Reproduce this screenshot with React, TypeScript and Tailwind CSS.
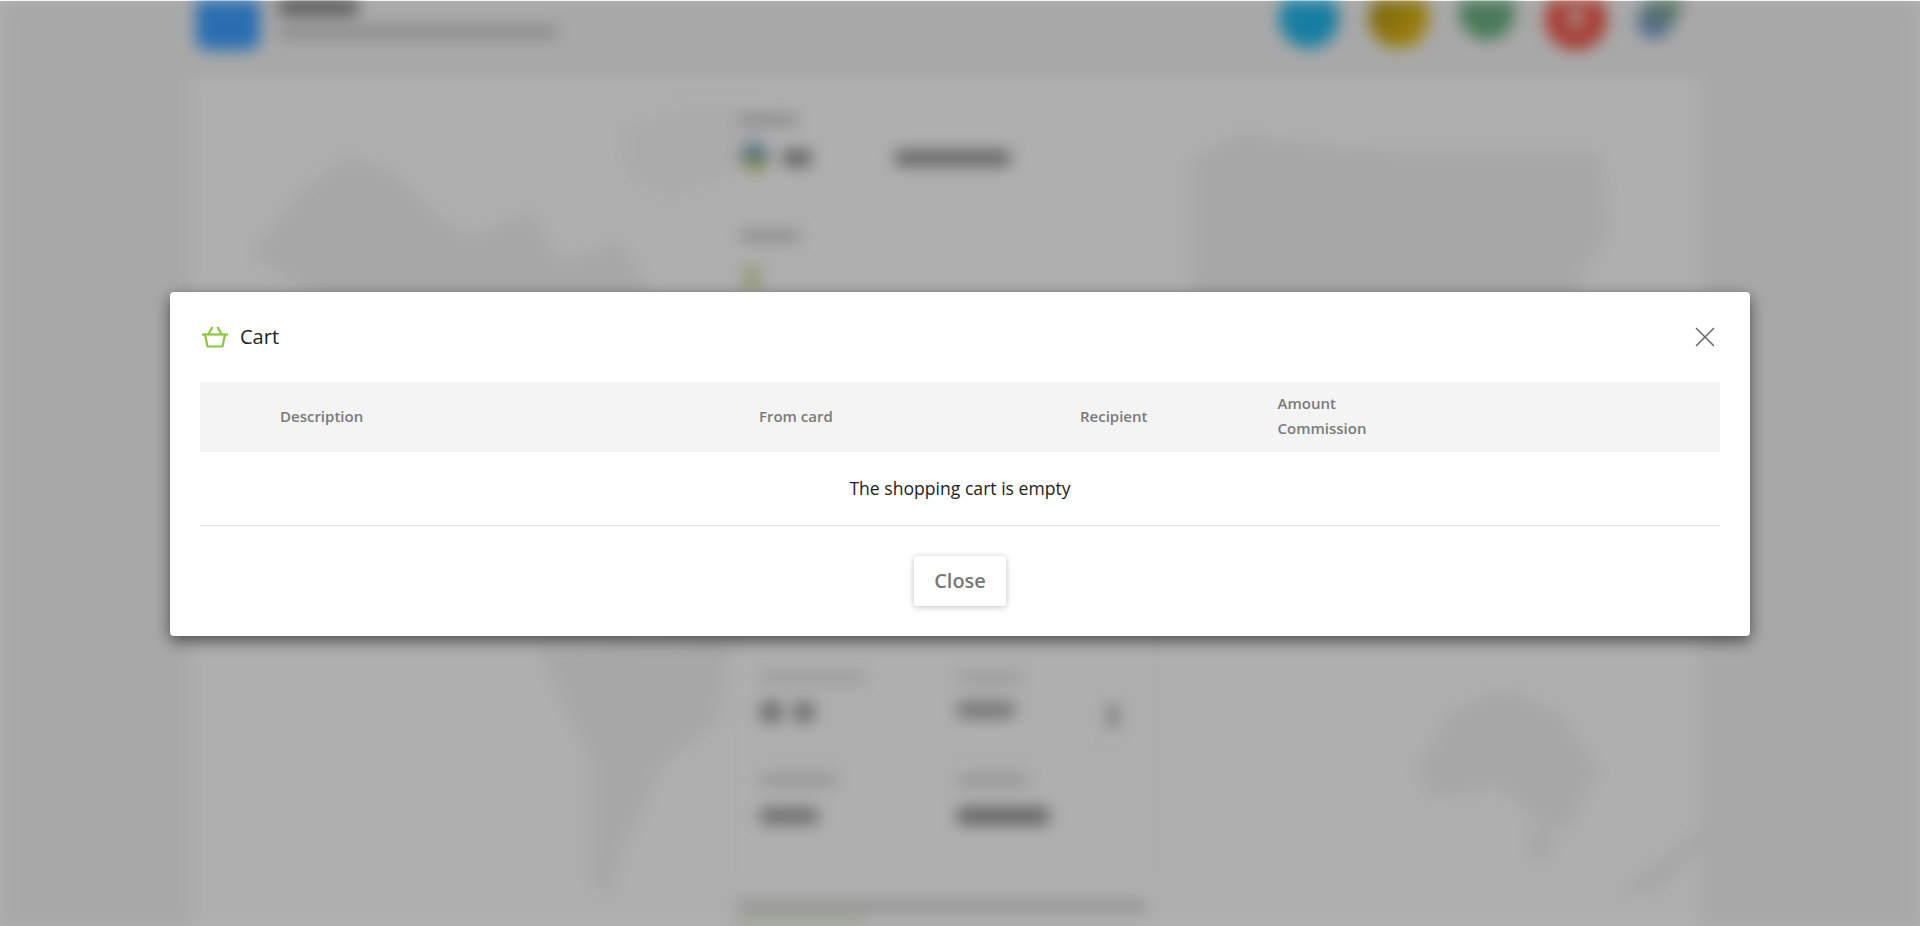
const Bar = ({ className }: { className: string }) => <div className={`rounded-sm ${className}`} />

function WorldMap() {
  return (
    <svg className="absolute -left-[190px] -top-[80px]" width="1920" height="926" viewBox="0 0 1920 926" fill="#f0f0f0">
      <path d="M250 255 L300 190 L345 155 L385 165 L440 215 L470 235 L530 210 L560 260 L620 240 L650 290 L640 400 L560 420 L480 400 L400 330 L300 290 Z" />
      <path d="M620 130 L700 100 L770 110 L740 170 L670 200 L630 180 Z" fill="#f4f4f4" />
      <path d="M540 650 L730 640 L720 720 L660 770 L620 860 L610 900 L590 880 L590 760 L560 700 Z" />
      <path d="M1190 160 L1240 130 L1290 140 L1400 150 L1600 150 L1610 230 L1580 280 L1600 400 L1460 420 L1300 400 L1190 330 Z" />
      <path d="M1415 770 L1450 710 L1500 685 L1560 710 L1600 770 L1570 830 L1540 825 L1500 790 L1430 800 Z" />
      <path d="M1525 830 L1555 830 L1550 860 L1530 860 Z" />
      <path d="M1625 885 L1670 850 L1700 825 L1705 845 L1660 890 L1630 900 Z" />
    </svg>
  )
}

function BlurredPage() {
  return (
    <div className="h-[926px] overflow-hidden bg-[#f1f1f1] blur-[8px]">
      <header className="flex h-20 items-start justify-between pl-[196px] pr-[243px]">
        <div className="flex gap-[18px]">
          <div className="mt-[-14px] h-[64px] w-[64px] rounded-xl bg-[#3d9eff]" />
          <div className="flex flex-col gap-3">
            <Bar className="h-3.5 w-20 bg-[#707070]" />
            <Bar className="h-3 w-[280px] bg-[#c4c4c4]" />
          </div>
        </div>
        <div className="flex items-start gap-[30px]">
          <div className="mt-[-12px] h-[60px] w-[60px] rounded-full bg-[#22b5e8]" />
          <div className="mt-[-12px] h-[60px] w-[60px] rounded-full bg-gradient-to-br from-[#a08a10] to-[#f5c518]" />
          <div className="mt-[-16px] h-[56px] w-[56px] rounded-full bg-[#6bb080]" />
          <div className="mt-[-12px] flex h-[62px] w-[62px] items-center justify-center rounded-full bg-[#f0584a]">
            <div className="h-5 w-4 rounded-b-full bg-[#f5c8c0]" />
          </div>
          <div className="ml-[6px] mt-[-16px] h-[56px] w-[34px] rotate-[30deg] rounded-full bg-gradient-to-t from-[#6f94d8] to-[#8cae60]" />
        </div>
      </header>

      <main className="relative ml-[190px] h-[846px] w-[1510px] bg-[#fbfbfb]">
        <WorldMap />
        <div className="relative ml-[546px] flex w-[420px] flex-col pt-[34px]">
          <Bar className="ml-[4px] h-3 w-[58px] bg-[#c8c8c8]" />
          <div className="mt-[18px] flex items-center">
            <div className="ml-[5px] h-7 w-7 rounded-full bg-gradient-to-b from-[#3f7fc4] to-[#e5d84a]" />
            <Bar className="ml-[14px] h-4 w-[28px] bg-[#888888]" />
            <Bar className="ml-[84px] h-4 w-[115px] bg-[#909090]" />
          </div>
          <Bar className="ml-[4px] mt-[58px] h-3 w-[60px] bg-[#c8c8c8]" />
          <div className="ml-[6px] mt-[22px] h-7 w-5 rounded-full bg-[#d4e0b0]" />

          <div className="ml-[1px] mt-[287px] flex h-[293px] flex-col justify-end rounded-sm border border-[#f0f0f0] px-[22px] pb-[47px]">
            <div className="grid grid-cols-[197px_1fr] gap-y-[23px]">
              <div className="flex flex-col gap-[18px] border-b border-[#f0f0f0] pb-5">
                <Bar className="h-3 w-[105px] bg-[#dddddd]" />
                <div className="flex gap-3">
                  <Bar className="h-5 w-[22px] bg-[#999999]" />
                  <Bar className="h-5 w-[20px] bg-[#999999]" />
                </div>
              </div>
              <div className="flex flex-col gap-[18px] border-b border-[#f0f0f0] pb-5">
                <Bar className="h-3 w-[66px] bg-[#dddddd]" />
                <div className="flex justify-between pr-[14px]">
                  <Bar className="h-4 w-[58px] bg-[#a5a5a5]" />
                  <Bar className="h-7 w-3 bg-[#bbbbbb]" />
                </div>
              </div>
              <div className="flex flex-col gap-[22px]">
                <Bar className="h-3 w-[78px] bg-[#d5d5d5]" />
                <Bar className="h-4 w-[58px] bg-[#999999]" />
              </div>
              <div className="flex flex-col gap-[22px]">
                <Bar className="h-3 w-[72px] bg-[#d5d5d5]" />
                <Bar className="h-4 w-[92px] bg-[#888888]" />
              </div>
            </div>
          </div>

          <Bar className="mt-[28px] h-3 w-[410px] bg-[#d0d0d0]" />
          <Bar className="mt-[8px] h-3 w-[130px] bg-[#d4e4b0]" />
        </div>
      </main>
    </div>
  )
}

function BasketIcon() {
  return (
    <svg width="26" height="22" viewBox="0 0 26 22" fill="none" stroke="#8cc63f" strokeWidth="2.2" className="ml-[2px]">
      <path d="M0 8.5H26" />
      <path d="M3 8.5L5.5 20.5H20.5L23 8.5" strokeLinejoin="round" />
      <path d="M6.5 8L10.5 1M19.5 8L15.5 1" />
    </svg>
  )
}

function CartModal() {
  const font = "font-['Open_Sans',sans-serif]"
  return (
    <div className="absolute inset-x-0 bottom-0 top-px bg-black/30">
      <div className={`absolute left-[170px] top-[291px] w-[1580px] rounded-sm bg-white px-[30px] shadow-[0_5px_16px_rgba(0,0,0,0.55)] ${font}`}>
        <div className="flex h-[90px] items-center justify-between">
          <div className="flex items-center gap-[12px]">
            <BasketIcon />
            <span className="text-[20px] text-[#222222]">Cart</span>
          </div>
          <button className="mr-[5px] text-[#666666]">
            <svg width="20" height="20" viewBox="0 0 20 20" stroke="currentColor" strokeWidth="1.5" className="block">
              <path d="M1 1L19 19M19 1L1 19" />
            </svg>
          </button>
        </div>

        <div className="grid h-[70px] grid-cols-[559px_321px_197.5px_1fr] items-center bg-[#f4f4f4] pb-px text-[15px] font-semibold leading-[25px] text-[#7a7a7a]">
          <div className="pl-[80px]">Description</div>
          <div>From card</div>
          <div>Recipient</div>
          <div className="-mt-px">
            Amount
            <br />
            Commission
          </div>
        </div>

        <div className="flex h-[74px] items-center justify-center border-b border-[#e2e2e2] text-[17.6px] text-[#222222]">
          The shopping cart is empty
        </div>

        <div className="flex h-[110px] items-center justify-center">
          <button className="h-[50px] w-[92px] rounded-[3px] bg-white pb-px text-[20px] font-semibold text-[#777777] shadow-[0_1px_6px_rgba(0,0,0,0.25)]">
            Close
          </button>
        </div>
      </div>
    </div>
  )
}

export default function App() {
  return (
    <div className="relative h-[926px] overflow-hidden bg-white">
      <BlurredPage />
      <CartModal />
    </div>
  )
}
